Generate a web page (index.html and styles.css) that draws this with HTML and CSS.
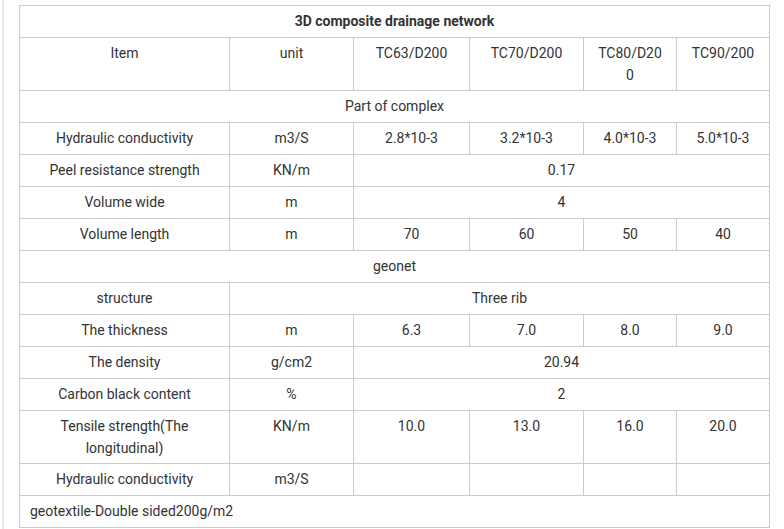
FILE: index.html
```html
<!DOCTYPE html>
<html>
<head>
<meta charset="utf-8">
<link rel="stylesheet" href="styles.css">
</head>
<body>
<div class="page">
<table class="spec">
<colgroup>
<col class="c1"><col class="c2"><col class="c3"><col class="c4"><col class="c5"><col class="c6">
</colgroup>
<tr><td colspan="6" class="title">3D composite drainage network</td></tr>
<tr><td>Item</td><td>unit</td><td>TC63/D200</td><td>TC70/D200</td><td>TC80/D200</td><td>TC90/200</td></tr>
<tr><td colspan="6">Part of complex</td></tr>
<tr><td>Hydraulic conductivity</td><td>m3/S</td><td>2.8*10-3</td><td>3.2*10-3</td><td>4.0*10-3</td><td>5.0*10-3</td></tr>
<tr><td>Peel resistance strength</td><td>KN/m</td><td colspan="4">0.17</td></tr>
<tr><td>Volume wide</td><td>m</td><td colspan="4">4</td></tr>
<tr><td>Volume length</td><td>m</td><td>70</td><td>60</td><td>50</td><td>40</td></tr>
<tr><td colspan="6">geonet</td></tr>
<tr><td>structure</td><td colspan="5">Three rib</td></tr>
<tr><td>The thickness</td><td>m</td><td>6.3</td><td>7.0</td><td>8.0</td><td>9.0</td></tr>
<tr><td>The density</td><td>g/cm2</td><td colspan="4">20.94</td></tr>
<tr><td>Carbon black content</td><td>%</td><td colspan="4">2</td></tr>
<tr><td>Tensile strength(The longitudinal)</td><td>KN/m</td><td>10.0</td><td>13.0</td><td>16.0</td><td>20.0</td></tr>
<tr><td>Hydraulic conductivity</td><td>m3/S</td><td></td><td></td><td></td><td></td></tr>
<tr><td colspan="6" class="left">geotextile-Double sided200g/m2</td></tr>
</table>
</div>
</body>
</html>
```
FILE: styles.css
```css
html, body {
  margin: 0;
  padding: 0;
  background: #fff;
}
.page {
  margin-left: 2px;
  border-left: 2px solid #e8e8f0;
  padding-left: 15px;
  padding-top: 5px;
  min-height: 529px;
  box-sizing: border-box;
}
.spec {
  border-collapse: collapse;
  table-layout: fixed;
  width: 750px;
  font-family: Roboto, "Liberation Sans", sans-serif;
  font-size: 14px;
  line-height: 22px;
  color: #333;
}
.c1 { width: 210px; }
.c2 { width: 124px; }
.c3 { width: 116px; }
.c4 { width: 114px; }
.c5 { width: 93px; }
.c6 { width: 93px; }
.spec td {
  border: 1px solid #cccccc;
  padding: 4px 13px;
  text-align: center;
  vertical-align: top;
  height: 23px;
  overflow-wrap: break-word;
}
.spec td.title {
  font-weight: bold;
}
.spec td.left {
  text-align: left;
  padding-left: 10px;
}
```
